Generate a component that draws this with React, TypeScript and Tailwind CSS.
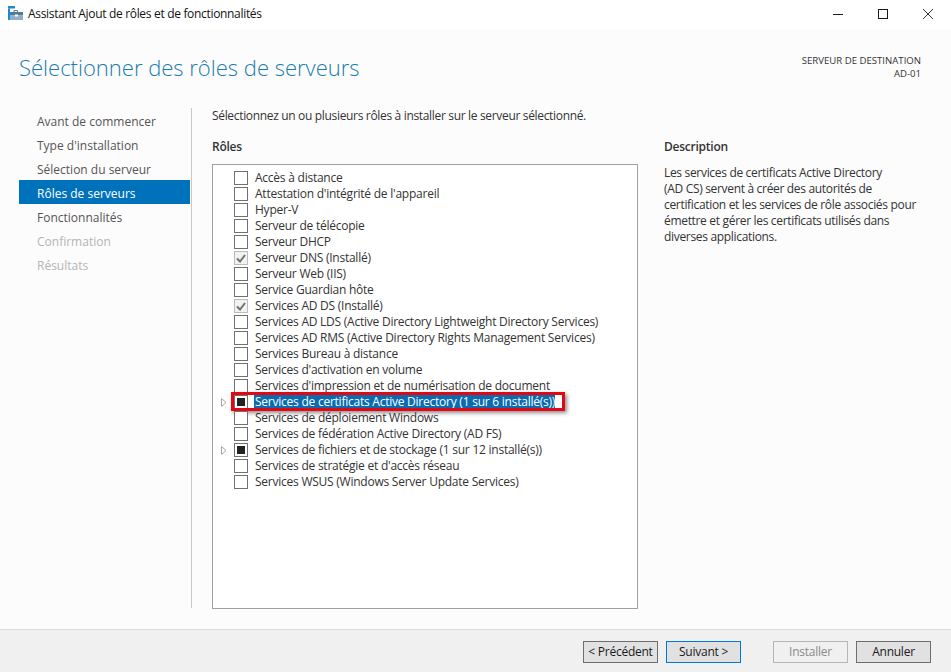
const navItems = [
  { label: "Avant de commencer", state: "done" },
  { label: "Type d'installation", state: "done" },
  { label: "Sélection du serveur", state: "done" },
  { label: "Rôles de serveurs", state: "active" },
  { label: "Fonctionnalités", state: "done" },
  { label: "Confirmation", state: "off" },
  { label: "Résultats", state: "off" },
];

type Role = { label: string; mark?: "check" | "partial"; expand?: boolean; hot?: boolean };

const roles: Role[] = [
  { label: "Accès à distance" },
  { label: "Attestation d'intégrité de l'appareil" },
  { label: "Hyper-V" },
  { label: "Serveur de télécopie" },
  { label: "Serveur DHCP" },
  { label: "Serveur DNS (Installé)", mark: "check" },
  { label: "Serveur Web (IIS)" },
  { label: "Service Guardian hôte" },
  { label: "Services AD DS (Installé)", mark: "check" },
  { label: "Services AD LDS (Active Directory Lightweight Directory Services)" },
  { label: "Services AD RMS (Active Directory Rights Management Services)" },
  { label: "Services Bureau à distance" },
  { label: "Services d'activation en volume" },
  { label: "Services d'impression et de numérisation de document" },
  { label: "Services de certificats Active Directory (1 sur 6 installé(s))", mark: "partial", expand: true, hot: true },
  { label: "Services de déploiement Windows" },
  { label: "Services de fédération Active Directory (AD FS)" },
  { label: "Services de fichiers et de stockage (1 sur 12 installé(s))", mark: "partial", expand: true },
  { label: "Services de stratégie et d'accès réseau" },
  { label: "Services WSUS (Windows Server Update Services)" },
];

function AppIcon() {
  return (
    <svg width="15" height="15" viewBox="0 0 15 15" className="mb-[2px]">
      <rect x="0" y="0" width="7" height="2.5" fill="#1b8ad3" />
      <rect x="0" y="2.5" width="2" height="11.5" fill="#1b8ad3" />
      <path d="M6 6V4.5h3.5V6" fill="none" stroke="#5b7f99" />
      <rect x="2" y="6" width="13" height="3.5" fill="#4f7c9c" />
      <rect x="2" y="9.5" width="13" height="4.5" fill="#8fb0c8" />
      <rect x="7" y="8.5" width="3" height="2" fill="#ffffff" />
    </svg>
  );
}

function WindowButtons() {
  return (
    <div className="mb-[2px] flex items-center gap-[35px] pr-[18px]">
      <svg width="10" height="10" viewBox="0 0 10 10">
        <path d="M0 5.5H10" stroke="#1a1a1a" />
      </svg>
      <svg width="10" height="10" viewBox="0 0 10 10">
        <rect x="0.5" y="0.5" width="9" height="9" fill="none" stroke="#1a1a1a" />
      </svg>
      <svg width="10" height="10" viewBox="0 0 10 10">
        <path d="M0 0L10 10M10 0L0 10" stroke="#1a1a1a" strokeWidth="0.9" />
      </svg>
    </div>
  );
}

function RoleRow({ role }: { role: Role }) {
  const muted = role.mark === "check";
  return (
    <div className="relative flex h-4 items-center">
      <div className="flex w-[21px] shrink-0 justify-start pl-[8px]">
        {role.expand && (
          <svg width="6" height="9" viewBox="0 0 6 9">
            <path d="M0.5 0.5L5 4.5L0.5 8.5Z" fill="#fff" stroke="#a6a6a6" />
          </svg>
        )}
      </div>
      <div className={`grid h-[14px] w-[14px] shrink-0 place-items-center border ${muted ? "border-[#bcbcbc] bg-[#f2f2f2]" : "border-[#707070] bg-white"}`}>
        {role.mark === "partial" && <div className="h-[8px] w-[8px] bg-[#222222]" />}
        {role.mark === "check" && (
          <svg width="10" height="9" viewBox="0 0 10 9">
            <path d="M1 4.5l3 3L9 1" fill="none" stroke="#707070" strokeWidth="2" />
          </svg>
        )}
      </div>
      <span className={`ml-[6px] whitespace-nowrap pl-px leading-4 ${role.hot ? "bg-[#0a6cb0] text-white" : ""}`}>
        {role.label}
      </span>
      {role.hot && <div className="h-4 w-[3px] bg-white" />}
      {role.hot && (
        <div className="absolute left-[18px] top-[-2px] h-[19px] w-[334px] border-[3px] border-[#e30613] shadow-[2px_2px_4px_rgba(0,0,0,0.45)]" />
      )}
    </div>
  );
}

function WizardButton({ label, kind }: { label: string; kind?: "primary" | "off" }) {
  const tone =
    kind === "primary"
      ? "border-[#0078d7] bg-[#e1e1e1] text-[#1a1a1a]"
      : kind === "off"
        ? "border-[#b5b5b5] bg-[#f0f0f0] text-[#8a8a8a]"
        : "border-[#6e6e6e] bg-[#e1e1e1] text-[#1a1a1a]";
  return (
    <button type="button" className={`h-[22px] w-[75px] border text-center text-[12px] leading-none tracking-[-0.25px] ${tone}`}>
      {label}
    </button>
  );
}

export default function App() {
  return (
    <div className="flex h-[672px] w-[951px] flex-col overflow-hidden bg-[#fcfcfc] font-['Open_Sans','Noto_Sans',sans-serif] text-[12px] tracking-[-0.24px] text-[#333333]">
      <header className="flex h-[29px] shrink-0 items-center bg-white pl-2 text-[#111111]">
        <AppIcon />
        <span className="ml-[5px] flex-1 pb-px tracking-[-0.32px]">Assistant Ajout de rôles et de fonctionnalités</span>
        <WindowButtons />
      </header>

      <div className="flex h-[79px] shrink-0 justify-between pl-[19px] pr-[30px]">
        <h1 className="pt-[22px] text-[22px] font-light leading-8 tracking-normal text-[#1a7cad]">
          Sélectionner des rôles de serveurs
        </h1>
        <div className="pt-[25px] text-right text-[9.6px] leading-[13px] tracking-normal text-[#333333]">
          <p>SERVEUR DE DESTINATION</p>
          <p>AD-01</p>
        </div>
      </div>

      <div className="flex min-h-0 flex-1 pl-[19px]">
        <nav className="w-[172px] shrink-0 pr-px tracking-normal">
          {navItems.map((item) => (
            <div
              key={item.label}
              className={`flex h-6 items-center pl-[18px] pt-[4px] ${
                item.state === "active" ? "bg-[#0072bc] text-white" : item.state === "off" ? "text-[#b5b5b5]" : "text-[#555555]"
              }`}
            >
              {item.label}
            </div>
          ))}
        </nav>

        <div className="h-[500px] w-px shrink-0 bg-[#c8c8c8]" />

        <main className="ml-[20px] flex h-[501px] flex-1 flex-col">
          <p className="leading-4 tracking-[-0.33px]">Sélectionnez un ou plusieurs rôles à installer sur le serveur sélectionné.</p>
          <div className="mt-[15px] flex min-h-0 flex-1">
            <section className="flex w-[426px] shrink-0 flex-col">
              <h2 className="font-semibold leading-4">Rôles</h2>
              <div className="mt-[9px] flex-1 border border-[#a0a0a0] bg-white pt-[5px]">
                {roles.map((role) => (
                  <RoleRow key={role.label} role={role} />
                ))}
              </div>
            </section>
            <section className="ml-[26px] w-[258px]">
              <h2 className="font-semibold leading-4">Description</h2>
              <p className="mt-[10px] whitespace-nowrap leading-4 tracking-[-0.32px]">
                Les services de certificats Active Directory
                <br />
                (AD CS) servent à créer des autorités de
                <br />
                certification et les services de rôle associés pour
                <br />
                émettre et gérer les certificats utilisés dans
                <br />
                diverses applications.
              </p>
            </section>
          </div>
        </main>
      </div>

      <footer className="flex h-[43px] shrink-0 items-center gap-[8px] border-t border-[#dcdcdc] bg-[#f0f0f0] pl-[583px] pt-[1px]">
        <WizardButton label="< Précédent" />
        <WizardButton label="Suivant >" kind="primary" />
        <div className="ml-[24px]">
          <WizardButton label="Installer" kind="off" />
        </div>
        <WizardButton label="Annuler" />
      </footer>
    </div>
  );
}
